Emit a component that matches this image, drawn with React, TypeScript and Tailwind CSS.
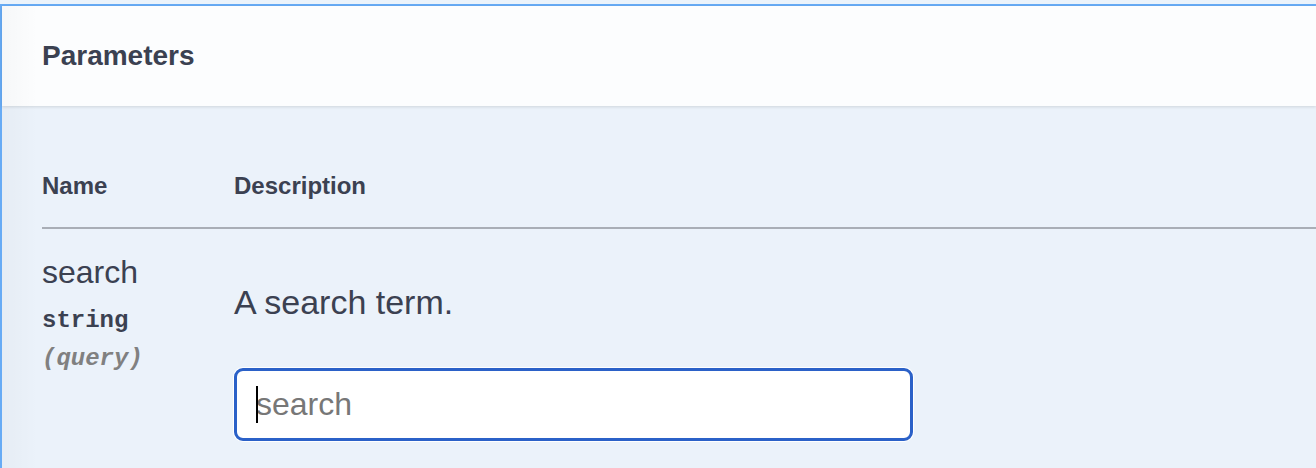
import React from 'react'

const sans = { fontFamily: '"Liberation Sans", Arial, sans-serif' }
const mono = { fontFamily: '"Liberation Mono", "Courier New", monospace' }

function ParamRow() {
    return (
        <div className="flex">
            {/* Name column */}
            <div className="w-[192px] shrink-0 pt-[25px]">
                <div className="text-[32px] leading-[36px] text-[#3b4151]" style={sans}>search</div>
                <div className="mt-[17px] text-[24px] leading-[28px] font-bold text-[#3b4151]" style={mono}>string</div>
                <div className="mt-[10px] text-[24px] leading-[28px] font-bold italic text-[#808080]" style={mono}>(query)</div>
            </div>

            {/* Description column */}
            <div className="flex-1 pt-[53px]">
                <p className="text-[34px] leading-[40px] text-[#3b4151]" style={sans}>A search term.</p>
                <div className="relative mt-[46px] w-[679px]">
                    <input
                        type="text"
                        placeholder="search"
                        className="block w-full h-[73px] rounded-[9px] border-[3px] border-[#2b61c8] bg-white pl-[19px] text-[32px] text-[#3b4151] placeholder:text-[#777] outline-none ring-1 ring-white"
                        style={sans}
                    />
                    {/* caret */}
                    <span className="absolute left-[22px] top-[18px] h-[37px] w-[2px] bg-black"></span>
                </div>
            </div>
        </div>
    )
}

export default function App() {
    return (
        <div className="w-[1316px] h-[468px] overflow-hidden bg-[#ebf3fb] pt-[4px]">
            <div className="relative h-full border-t-2 border-l-2 border-[#67abf5] bg-[#ebf2fa]">
                {/* left edge shading */}
                <div className="absolute left-0 top-0 bottom-0 w-[36px] bg-gradient-to-r from-[rgba(0,0,0,0.025)] to-transparent pointer-events-none z-20"></div>

                {/* Section header */}
                <div className="relative z-10 h-[100px] flex items-center pl-[40px] bg-[#fcfdfe] shadow-[0_1px_3px_rgba(0,0,0,0.12)]">
                    <h4 className="text-[28px] font-bold text-[#3b4151]" style={sans}>Parameters</h4>
                </div>

                {/* Table */}
                <div className="pl-[40px]">
                    <div className="flex pt-[66px] pb-[27px] border-b-2 border-[#a9aeb6]">
                        <div className="w-[192px] shrink-0 text-[24px] leading-[28px] font-bold text-[#3b4151]" style={sans}>Name</div>
                        <div className="flex-1 text-[24px] leading-[28px] font-bold text-[#3b4151]" style={sans}>Description</div>
                    </div>
                    <ParamRow />
                </div>
            </div>
        </div>
    )
}
